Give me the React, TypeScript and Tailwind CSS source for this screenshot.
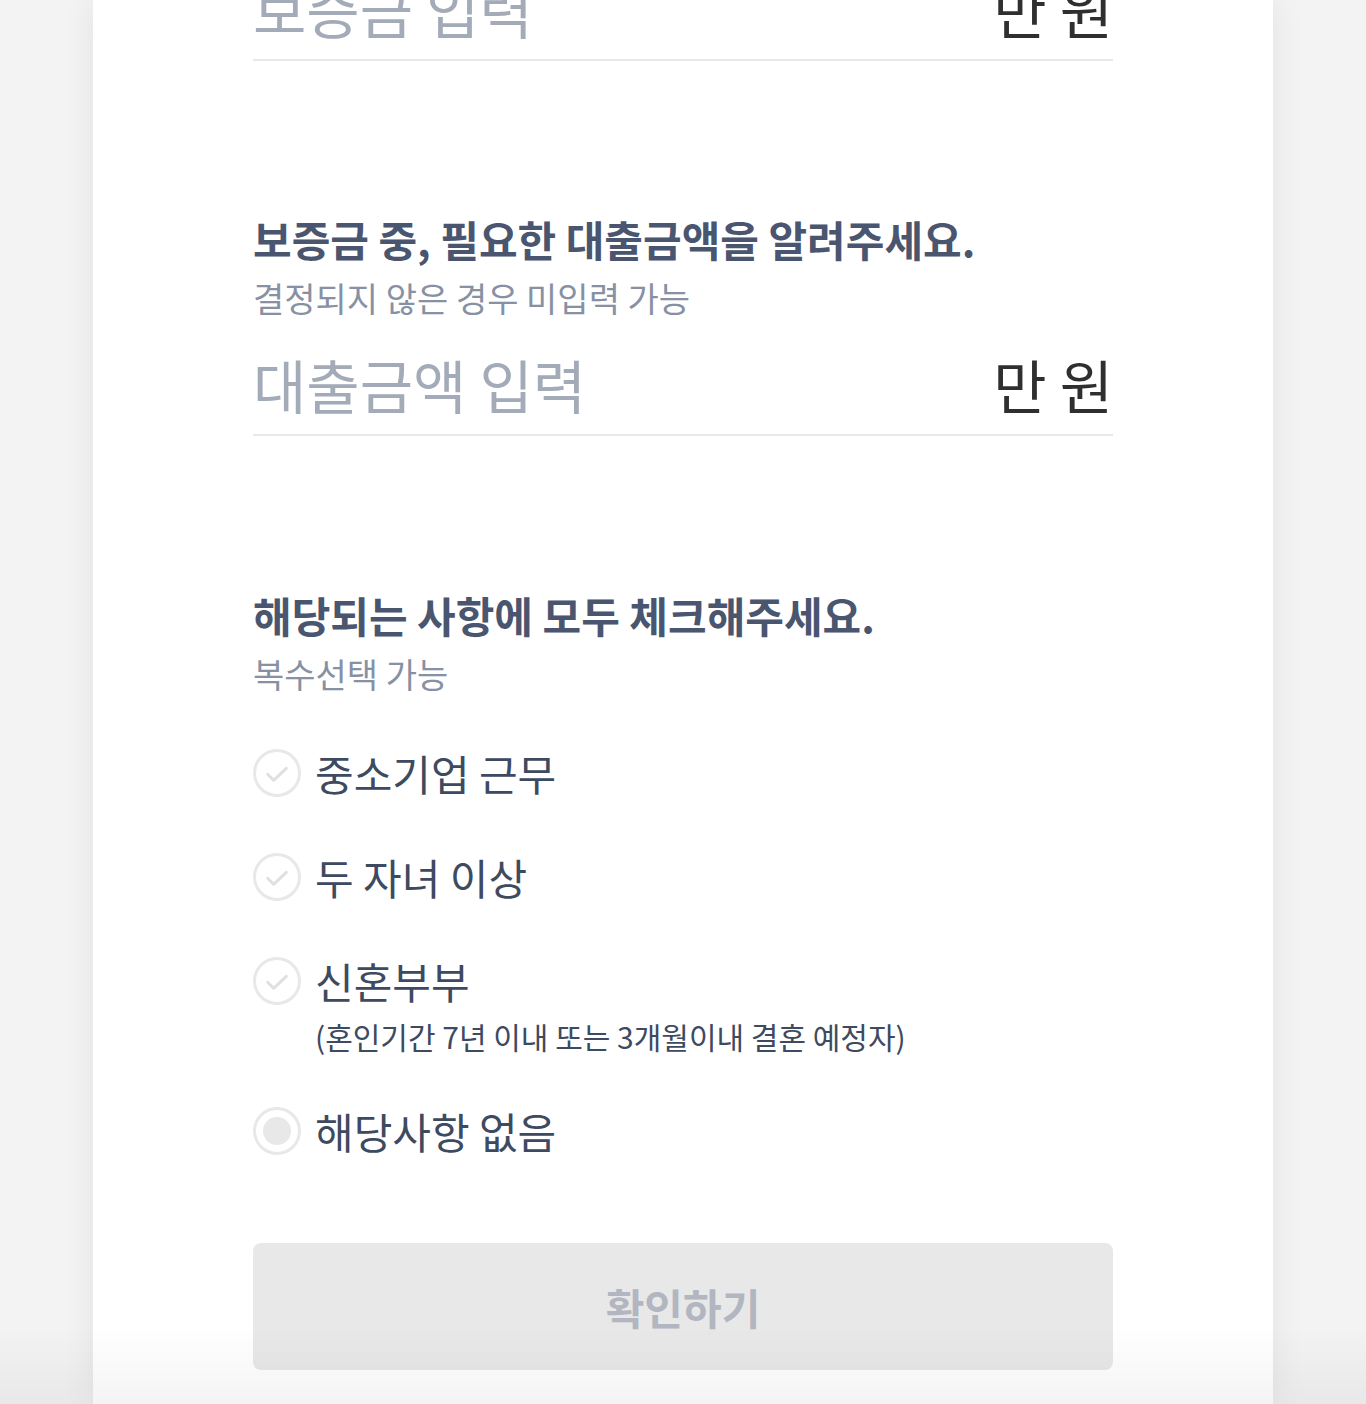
import { useState } from "react";

const options = [
  { id: "sme", label: "중소기업 근무" },
  { id: "kids", label: "두 자녀 이상" },
  { id: "newlywed", label: "신혼부부", note: "(혼인기간 7년 이내 또는 3개월이내 결혼 예정자)" },
  { id: "none", label: "해당사항 없음", radio: true },
];

const font = "font-['Noto_Sans_CJK_KR','Noto_Sans',sans-serif]";

function AmountInput({ placeholder, className = "" }: { placeholder: string; className?: string }) {
  return (
    <div className={`flex items-center border-b-2 border-[#e9e9e9] pb-[18px] ${className}`}>
      <input
        className="min-w-0 flex-1 bg-transparent text-[58px] leading-[64px] text-[#333] outline-none placeholder:text-[#a3abb8]"
        placeholder={placeholder}
        inputMode="numeric"
      />
      <span className="text-[58px] leading-[64px] text-[#2f2f2f]">만 원</span>
    </div>
  );
}

function CheckCircle({ radio, checked }: { radio?: boolean; checked: boolean }) {
  return (
    <span className="flex h-[48px] w-[48px] shrink-0 items-center justify-center rounded-full border-[3px] border-[#e8e8e8]">
      {radio ? (
        <span className={`h-[28px] w-[28px] rounded-full ${checked ? "bg-[#4a5670]" : "bg-[#e8e8e8]"}`} />
      ) : (
        <svg width="32" height="32" viewBox="0 0 24 24" fill="none">
          <path
            d="M5 13l4.5 4.5L19 8.5"
            stroke={checked ? "#4a5670" : "#e0e0e0"}
            strokeWidth="2.2"
            strokeLinecap="round"
            strokeLinejoin="round"
          />
        </svg>
      )}
    </span>
  );
}

export default function App() {
  const [picked, setPicked] = useState<string[]>([]);

  const toggle = (id: string) =>
    setPicked((prev) => (prev.includes(id) ? prev.filter((p) => p !== id) : [...prev, id]));

  return (
    <div className={`min-h-screen w-full overflow-hidden bg-[#f3f3f3] ${font}`}>
      <div className="relative mx-auto flex min-h-screen w-[1180px] flex-col bg-white px-[160px] pb-[34px] shadow-[0_0_32px_rgba(0,0,0,0.07)]">
        <AmountInput placeholder="보증금 입력" className="-mt-[23px]" />

        <h2 className="mt-[152px] text-[42px] font-bold leading-[52px] text-[#4a5670]">
          보증금 중, 필요한 대출금액을 알려주세요.
        </h2>
        <p className="mt-[13px] text-[34px] leading-[40px] text-[#8791a3]">결정되지 않은 경우 미입력 가능</p>
        <AmountInput placeholder="대출금액 입력" className="mt-[34px]" />

        <h2 className="mt-[153px] text-[42px] font-bold leading-[52px] text-[#4a5670]">
          해당되는 사항에 모두 체크해주세요.
        </h2>
        <p className="mt-[13px] text-[34px] leading-[40px] text-[#8791a3]">복수선택 가능</p>

        <ul className="mt-[51px] flex flex-col gap-[48px]">
          {options.map((opt) => (
            <li key={opt.id}>
              <button type="button" onClick={() => toggle(opt.id)} className="flex flex-col text-left">
                <span className="flex h-[56px] items-center gap-[14px]">
                  <CheckCircle radio={opt.radio} checked={picked.includes(opt.id)} />
                  <span className="text-[42px] leading-[56px] text-[#3d4a60]">{opt.label}</span>
                </span>
                {opt.note && (
                  <span className="mt-[8px] pl-[62px] text-[30px] leading-[38px] text-[#3d4a60]">{opt.note}</span>
                )}
              </button>
            </li>
          ))}
        </ul>

        <button
          type="button"
          disabled
          className="mt-[84px] h-[127px] w-full rounded-[8px] bg-[#e8e8e8] text-[42px] font-bold text-[#b1b6c0]"
        >
          확인하기
        </button>
      </div>

      <div className="pointer-events-none fixed inset-x-0 bottom-0 h-[76px] bg-gradient-to-b from-transparent to-[rgba(0,0,0,0.045)]" />
    </div>
  );
}
